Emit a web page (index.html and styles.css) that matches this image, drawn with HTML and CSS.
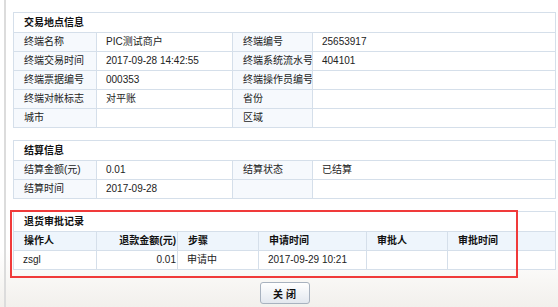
FILE: index.html
```html
<!DOCTYPE html>
<html lang="zh-CN">
<head>
    <meta charset="UTF-8">
    <title>退货详情</title>
    <link rel="stylesheet" href="styles.css">
</head>
<body>
    <div class="page">
        <table class="info">
            <colgroup><col class="c1"><col class="c2"><col class="c3"><col></colgroup>
            <tr><td colspan="4" class="title">交易地点信息</td></tr>
            <tr><td class="lbl">终端名称</td><td>PIC测试商户</td><td class="lbl">终端编号</td><td>25653917</td></tr>
            <tr><td class="lbl">终端交易时间</td><td>2017-09-28 14:42:55</td><td class="lbl">终端系统流水号</td><td>404101</td></tr>
            <tr><td class="lbl">终端票据编号</td><td>000353</td><td class="lbl">终端操作员编号</td><td></td></tr>
            <tr><td class="lbl">终端对帐标志</td><td>对平账</td><td class="lbl">省份</td><td></td></tr>
            <tr><td class="lbl">城市</td><td></td><td class="lbl">区域</td><td></td></tr>
        </table>

        <table class="info">
            <colgroup><col class="c1"><col class="c2"><col class="c3"><col></colgroup>
            <tr><td colspan="4" class="title">结算信息</td></tr>
            <tr><td class="lbl">结算金额(元)</td><td>0.01</td><td class="lbl">结算状态</td><td>已结算</td></tr>
            <tr><td class="lbl">结算时间</td><td>2017-09-28</td><td class="lbl"></td><td></td></tr>
        </table>

        <div class="marked">
            <table class="info">
                <colgroup>
                    <col class="c1"><col class="r2"><col class="r3"><col class="r4"><col class="r5"><col class="r6"><col>
                </colgroup>
                <tr><td colspan="7" class="title">退货审批记录</td></tr>
                <tr class="head">
                    <td>操作人</td><td class="num">退款金额(元)</td><td>步骤</td><td>申请时间</td><td>审批人</td><td>审批时间</td><td></td>
                </tr>
                <tr>
                    <td>zsgl</td><td class="num">0.01</td><td>申请中</td><td>2017-09-29 10:21</td><td></td><td></td><td></td>
                </tr>
            </table>
            <div class="highlight"></div>
        </div>

        <div class="actions">
            <button class="btn">关 闭</button>
        </div>
    </div>
</body>
</html>
```

FILE: styles.css
```css
html, body {
    height: 100%;
}
body {
    margin: 0;
    font-family: "Liberation Sans", "Noto Sans CJK SC", sans-serif;
    font-size: 10px;
    color: #222;
    background: linear-gradient(#fff 250px, #f2f0ec 307px);
}
.page {
    margin-left: 4px;
    border-left: 2px solid #dcdcdc;
    padding: 12px 2px 0 7px;
    height: 307px;
    box-sizing: border-box;
}
.info {
    width: 543px;
    border-collapse: collapse;
    table-layout: fixed;
    margin-bottom: 12px;
    background: #fff;
}
.info td {
    border: 1px solid #d5dfea;
    height: 18px;
    padding: 0 9px;
    line-height: 18px;
    white-space: nowrap;
    overflow: hidden;
}
.info .title {
    height: 19px;
    padding-left: 10px;
    font-weight: bold;
    color: #111;
}
.info .lbl {
    padding-left: 10px;
    background: #f6f9fd;
}
.c1 { width: 83px; }
.c2 { width: 136px; }
.c3 { width: 80px; }
.r2 { width: 81px; }
.r3 { width: 81px; }
.r4 { width: 108px; }
.r5 { width: 81px; }
.r6 { width: 70px; }

.head td {
    background: #eef5fc;
    font-weight: bold;
    color: #111;
    padding-left: 10px;
}
.info td.num {
    text-align: right;
    padding-right: 1px;
}
.marked {
    position: relative;
}
.highlight {
    position: absolute;
    left: -3px;
    top: -1px;
    width: 504px;
    height: 64px;
    border: 2px solid #f03a3a;
}
.actions {
    text-align: center;
    width: 543px;
}
.btn {
    width: 50px;
    height: 22px;
    padding: 0;
    font-family: "Liberation Sans", "Noto Sans CJK SC", sans-serif;
    font-size: 10px;
    font-weight: bold;
    color: #111;
    border: 1px solid #a8b2bf;
    border-radius: 3px;
    background: linear-gradient(#ffffff, #e3e8ef);
    cursor: pointer;
}
```
